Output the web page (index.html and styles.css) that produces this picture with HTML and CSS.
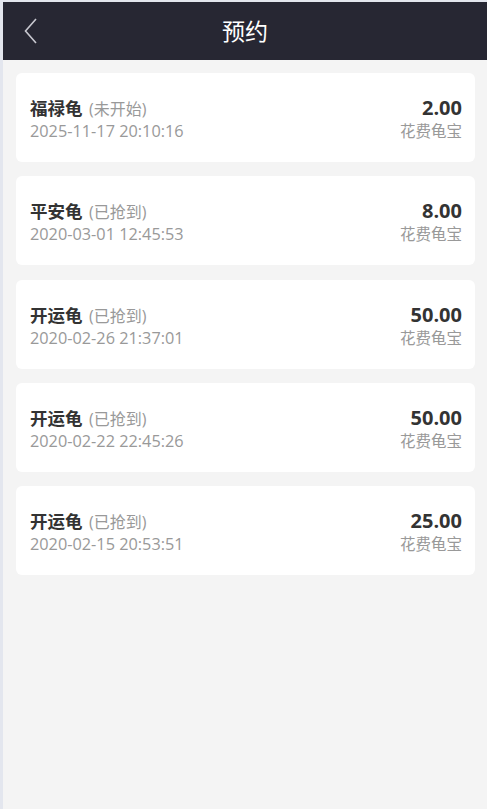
FILE: index.html
```html
<!DOCTYPE html>
<html lang="zh-CN">
<head>
    <meta charset="UTF-8">
    <meta name="viewport" content="width=device-width, initial-scale=1.0">
    <title>预约</title>
    <link rel="stylesheet" href="styles.css">
</head>
<body>
    <!-- Header -->
    <div class="header">
        <span class="back">
            <svg width="14" height="26" viewBox="0 0 14 26">
                <polyline points="12,1 1.5,13 12,25" fill="none" stroke="#c8c8d0" stroke-width="1.6"/>
            </svg>
        </span>
        <h1>预约</h1>
    </div>

    <!-- Reservation list -->
    <div class="list">
        <div class="card">
            <div class="info">
                <div class="name">福禄龟 <span class="status">(未开始)</span></div>
                <div class="time">2025-11-17 20:10:16</div>
            </div>
            <div class="cost">
                <div class="amount">2.00</div>
                <div class="unit">花费龟宝</div>
            </div>
        </div>

        <div class="card">
            <div class="info">
                <div class="name">平安龟 <span class="status">(已抢到)</span></div>
                <div class="time">2020-03-01 12:45:53</div>
            </div>
            <div class="cost">
                <div class="amount">8.00</div>
                <div class="unit">花费龟宝</div>
            </div>
        </div>

        <div class="card">
            <div class="info">
                <div class="name">开运龟 <span class="status">(已抢到)</span></div>
                <div class="time">2020-02-26 21:37:01</div>
            </div>
            <div class="cost">
                <div class="amount">50.00</div>
                <div class="unit">花费龟宝</div>
            </div>
        </div>

        <div class="card">
            <div class="info">
                <div class="name">开运龟 <span class="status">(已抢到)</span></div>
                <div class="time">2020-02-22 22:45:26</div>
            </div>
            <div class="cost">
                <div class="amount">50.00</div>
                <div class="unit">花费龟宝</div>
            </div>
        </div>

        <div class="card">
            <div class="info">
                <div class="name">开运龟 <span class="status">(已抢到)</span></div>
                <div class="time">2020-02-15 20:53:51</div>
            </div>
            <div class="cost">
                <div class="amount">25.00</div>
                <div class="unit">花费龟宝</div>
            </div>
        </div>
    </div>
</body>
</html>
```

FILE: styles.css
```css
html, body {
    height: 100%;
}

body {
    margin: 0;
    font-family: "Open Sans", "Noto Sans CJK SC", sans-serif;
    background-color: #f4f4f4;
    border-left: 3px solid #e3e6ee;
    border-top: 2px solid #e3e6ee;
    box-sizing: border-box;
}

.header {
    position: relative;
    height: 58px;
    background: #272733;
    display: flex;
    align-items: center;
    justify-content: center;
}

.header h1 {
    margin: 0;
    font-size: 23px;
    font-weight: normal;
    color: #fff;
    line-height: 1;
}

.back {
    position: absolute;
    left: 21px;
    top: 16px;
    display: flex;
}

.list {
    display: flex;
    flex-direction: column;
    gap: 14.25px;
    padding: 13px 12px 0 13px;
}

.card {
    display: flex;
    justify-content: space-between;
    align-items: center;
    height: 89px;
    box-sizing: border-box;
    background: #fff;
    border-radius: 6px;
    padding: 5px 13px 0 14px;
}

.name {
    font-size: 17.5px;
    font-weight: bold;
    color: #333;
    line-height: 23px;
    height: 23px;
}

.status {
    margin-left: 2px;
    font-size: 16px;
    font-weight: normal;
    color: #999;
}

.time {
    font-size: 16.3px;
    color: #999;
    line-height: 23px;
}

.cost {
    text-align: right;
    margin-top: -3px;
}

.amount {
    font-size: 20px;
    font-weight: bold;
    color: #333;
    line-height: 25px;
    height: 25px;
}

.unit {
    font-size: 15.5px;
    color: #999;
    line-height: 22px;
}
```
